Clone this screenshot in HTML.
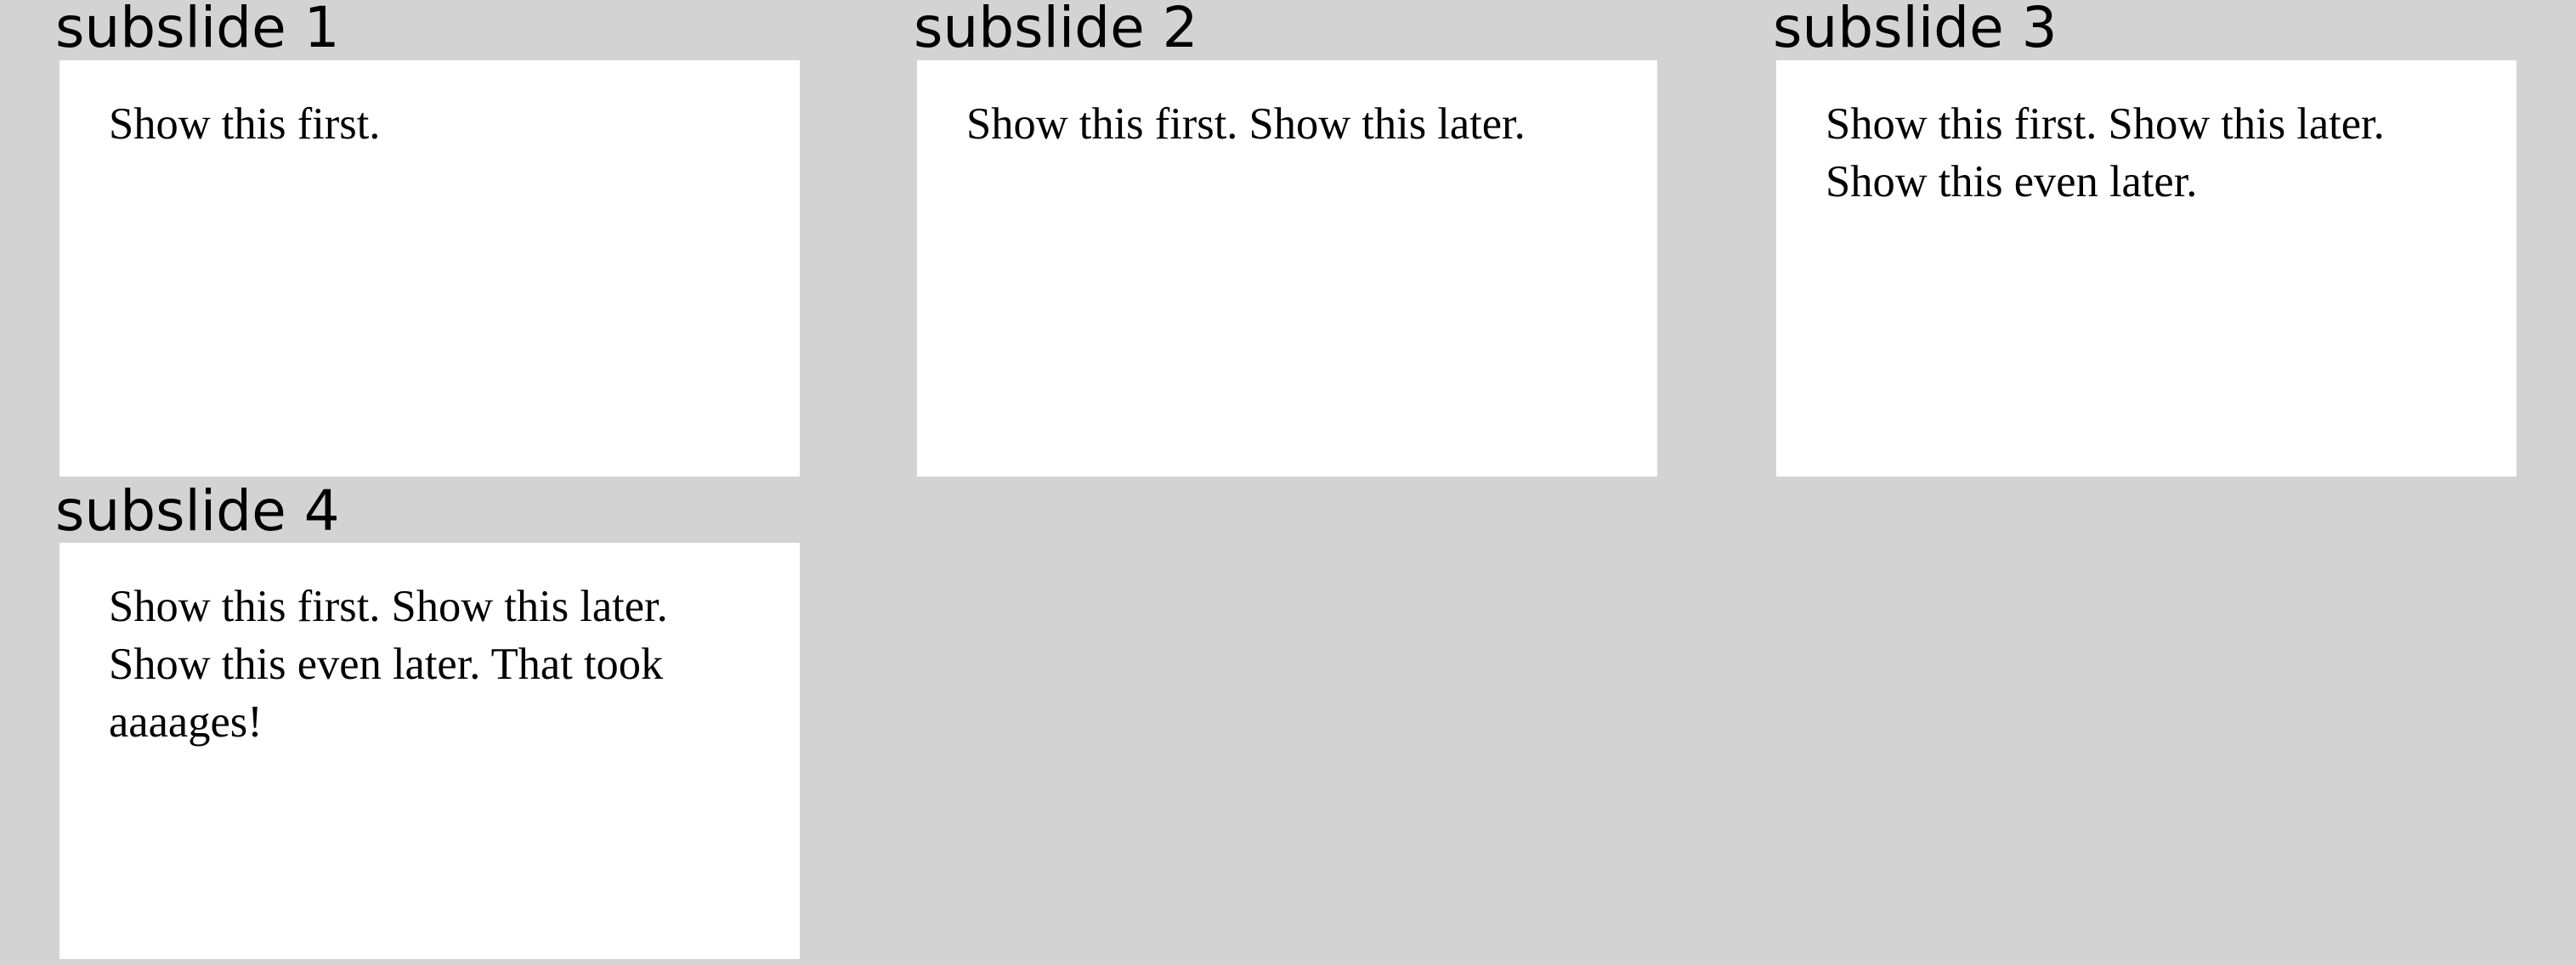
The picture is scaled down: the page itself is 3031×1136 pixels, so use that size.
<!DOCTYPE html>
<html><head><style>
body{margin:0;width:3031px;height:1136px;background:#d3d3d3;position:relative;overflow:hidden}
.t{position:absolute;font-family:"DejaVu Sans",sans-serif;font-size:66px;line-height:1;color:#000;white-space:nowrap}
.s{position:absolute;background:#fff;width:871px;height:490px;font-family:"Liberation Serif",serif;font-size:52.5px;line-height:68px;color:#000}
.s div{position:absolute;left:58px;width:800px;white-space:nowrap}
</style></head><body>
<div class="t" style="left:65px;top:0px">subslide 1</div>
<div class="t" style="left:1075px;top:0px">subslide 2</div>
<div class="t" style="left:2086px;top:0px">subslide 3</div>
<div class="t" style="left:65px;top:569px">subslide 4</div>
<div class="s" style="left:70px;top:71px"><div style="top:41px">Show this first.</div></div>
<div class="s" style="left:1079px;top:71px"><div style="top:41px">Show this first. Show this later.</div></div>
<div class="s" style="left:2090px;top:71px"><div style="top:41px">Show this first. Show this later.<br>Show this even later.</div></div>
<div class="s" style="left:70px;top:639px"><div style="top:41px">Show this first. Show this later.<br>Show this even later. That took<br>aaaages!</div></div>
</body></html>
